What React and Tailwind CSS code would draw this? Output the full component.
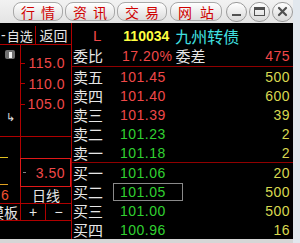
import React from 'react';

const sells = [
  { label: '卖五', price: '101.45', vol: '500', color: 'text-[#f04848]' },
  { label: '卖四', price: '101.40', vol: '600', color: 'text-[#f04848]' },
  { label: '卖三', price: '101.39', vol: '39', color: 'text-[#f04848]' },
  { label: '卖二', price: '101.23', vol: '2', color: 'text-[#30d030]' },
  { label: '卖一', price: '101.18', vol: '2', color: 'text-[#30d030]' },
];

const buys = [
  { label: '买一', price: '101.06', vol: '20' },
  { label: '买二', price: '101.05', vol: '500', boxed: true },
  { label: '买三', price: '101.00', vol: '500' },
  { label: '买四', price: '100.96', vol: '16' },
];

const cjk = { fontFamily: '"Noto Sans CJK SC", "DejaVu Sans", sans-serif' };
const num = { fontFamily: '"Liberation Sans", Arial, sans-serif' };

function TabButton({ a, b }) {
  return (
    <div
      className="h-[19px] w-[52px] flex items-center justify-between px-[7px] rounded-[8px] border border-[#a8a8a8] bg-gradient-to-b from-[#ffffff] to-[#dcdcdc] text-[#d00000] text-[14px] leading-none"
      style={cjk}
    >
      <span>{a}</span>
      <span>{b}</span>
    </div>
  );
}

function CircleButton({ children }) {
  return (
    <div className="w-[21px] h-[20px] rounded-full border border-[#9a9a9a] bg-gradient-to-b from-[#ffffff] to-[#d8d8d8] flex items-center justify-center">
      {children}
    </div>
  );
}

function Row({ label, price, vol, priceColor, boxed }) {
  return (
    <div className="h-[19px] flex items-center">
      <div className="w-[48px] pl-[1px] text-[15px] text-[#e6e6e6] leading-[16px]" style={cjk}>{label}</div>
      <div className="relative w-[62px] h-[19px] flex items-center">
        {boxed && <div className="absolute left-[-7px] top-[1px] w-[70px] h-[18px] border border-[#8a8a8a]" />}
        <span className={`text-[14px] tracking-[0.5px] leading-none ${priceColor}`} style={num}>{price}</span>
      </div>
      <div className="flex-1 text-right pr-[3px] text-[14px] tracking-[0.5px] text-[#d8d850] leading-none" style={num}>{vol}</div>
    </div>
  );
}

export default function App() {
  return (
    <div className="w-[300px] h-[243px] flex overflow-hidden bg-[#e2e8ee]">
      <div className="w-[293px] flex flex-col">
        {/* toolbar */}
        <div className="h-[23px] bg-gradient-to-b from-[#f2f2f2] to-[#e4e4e4] flex items-center pl-[13px] gap-[2px]">
          <TabButton a="行" b="情" />
          <TabButton a="资" b="讯" />
          <TabButton a="交" b="易" />
          <div className="ml-[1px]"><TabButton a="网" b="站" /></div>
          <div className="flex gap-[2px] ml-[2px]">
            <CircleButton>
              <div className="w-[9px] h-[2px] bg-[#505050] mt-[7px]" />
            </CircleButton>
            <CircleButton>
              <div className="w-[11px] h-[9px] border border-[#505050] border-t-[3px]" />
            </CircleButton>
            <CircleButton>
              <svg width="11" height="11" viewBox="0 0 11 11">
                <path d="M2 2 L9 9 M9 2 L2 9" stroke="#505050" strokeWidth="2.2" strokeLinecap="round" />
              </svg>
            </CircleButton>
          </div>
        </div>

        {/* black body */}
        <div className="h-[216px] bg-black flex">
          {/* left panel */}
          <div className="w-[72px] border-r border-[#b00000] flex flex-col">
            <div className="h-[22px] flex border-b border-[#b00000] text-[#e6e6e6] leading-none pt-[3px]">
              <div className="w-[36px] border-r border-[#b00000] flex items-center pl-[1px] whitespace-nowrap">
                <span className="text-[14px]" style={num}>-</span>
                <span className="text-[13px] ml-[1px]" style={cjk}>自选</span>
              </div>
              <div className="flex-1 flex items-center justify-center text-[14px]" style={cjk}>返回</div>
            </div>
            <div className="h-[92px] flex border-b border-[#b00000]">
              <div className="w-[21px] border-r border-[#b00000] flex flex-col items-center">
                <div className="mt-[5px] w-[10px] h-[9px] rounded-[2px] bg-[#707070] flex items-center justify-center">
                  <div className="w-[3px] h-[6px] bg-[#f0f0f0]" />
                </div>
                <div className="mt-[53px] text-[11px] text-[#e0e0e0] leading-none" style={num}>↳</div>
              </div>
              <div className="flex-1 flex flex-col pt-[8px]">
                {['115.0', '110.0', '105.0'].map((v) => (
                  <div key={v} className="h-[20.5px] flex items-center">
                    <div className="w-[4px] h-[1px] bg-[#b00000]" />
                    <div className="flex-1 text-right pr-[6px] text-[14px] tracking-[0.5px] text-[#f04848] leading-none" style={num}>{v}</div>
                  </div>
                ))}
              </div>
            </div>
            <div className="h-[21px] flex items-end">
              <div className="w-[21px] h-full border-r border-[#b00000] flex items-end">
                <div className="w-[8px] h-[1px] bg-[#e0c020]" />
              </div>
            </div>
            <div className="h-[29px] flex">
              <div className="w-[20px] flex items-end">
                <div className="w-[8px] h-[1px] bg-[#e0a020] mb-[2px]" />
              </div>
              <div className="flex-1 border border-[#e01818] flex items-center">
                <div className="w-[3px] h-[1px] bg-[#808080] ml-[2px]" />
                <div className="flex-1 text-right pr-[5px] text-[14px] tracking-[0.5px] text-[#f04848] leading-none" style={num}>3.50</div>
              </div>
            </div>
            <div className="h-[17px] flex border-b border-[#b00000]">
              <div className="w-[21px] border-r border-[#b00000] text-[14px] text-[#f05030] leading-none flex items-center pl-[1px]" style={num}>6</div>
              <div className="flex-1 flex items-center justify-center text-[14px] text-[#e6e6e6] leading-none" style={cjk}>日线</div>
            </div>
            <div className="h-[17px] flex border-b border-[#b00000] text-[#e6e6e6] leading-none">
              <div className="w-[21px] border-r border-[#b00000] flex items-center justify-end overflow-hidden whitespace-nowrap text-[14px] pr-[2px]" style={cjk}>模板</div>
              <div className="w-[25px] border-r border-[#b00000] flex items-center justify-center text-[14px]" style={num}>+</div>
              <div className="flex-1 flex items-center justify-center text-[14px]" style={num}>−</div>
            </div>
          </div>

          {/* right panel */}
          <div className="flex-1 flex flex-col overflow-hidden">
            <div className="h-[26px] flex items-center pt-[2px]">
              <span className="ml-[21px] text-[15px] text-[#f04848] leading-none" style={num}>L</span>
              <span className="ml-[22px] text-[14px] font-bold text-[#ffff40] leading-none" style={num}>110034</span>
              <span className="ml-[6px] text-[16px] text-[#40e0e0] leading-[16px]" style={cjk}>九州转债</span>
            </div>
            <div className="h-[22px] flex items-center border-b border-[#900000]">
              <div className="w-[50px] pl-[1px] text-[15px] text-[#e6e6e6] leading-[16px]" style={cjk}>委比</div>
              <span className="text-[14px] tracking-[0.5px] text-[#f04848] leading-none" style={num}>17.20%</span>
              <span className="ml-[3px] text-[15px] text-[#e6e6e6] leading-[16px]" style={cjk}>委差</span>
              <span className="flex-1 text-right pr-[3px] text-[14px] tracking-[0.5px] text-[#f04848] leading-none" style={num}>475</span>
            </div>
            <div className="flex flex-col border-b border-[#900000]">
              {sells.map((r) => (
                <Row key={r.label} label={r.label} price={r.price} vol={r.vol} priceColor={r.color} />
              ))}
            </div>
            <div className="flex flex-col">
              {buys.map((r) => (
                <Row key={r.label} label={r.label} price={r.price} vol={r.vol} priceColor="text-[#30d030]" boxed={r.boxed} />
              ))}
            </div>
          </div>
        </div>

        <div className="flex-1 bg-[#d6d6d6]" />
      </div>
      <div className="flex-1" />
    </div>
  );
}
